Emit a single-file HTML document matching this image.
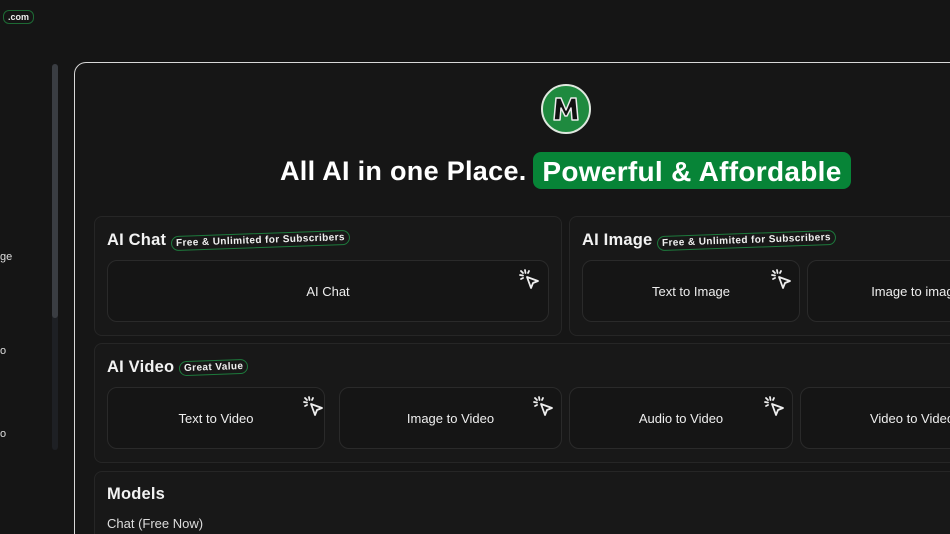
<!DOCTYPE html>
<html><head><meta charset="utf-8"><style>
*{margin:0;padding:0;box-sizing:border-box}
html,body{width:950px;height:534px;overflow:hidden}
body{background:#151515;font-family:"Liberation Sans","DejaVu Sans",sans-serif;color:#eee;position:relative}
.abs{position:absolute}
.panel{left:74px;top:62px;width:900px;height:490px;border:1px solid #d8d8d8;border-radius:12px;background:#161616}
.sec{border:1px solid #262626;border-radius:8px;background:#181818}
.card{border:1px solid #2a2a2a;border-radius:10px;background:#151515;display:flex;align-items:center;justify-content:center;font-size:13px;color:#eee}
.title{font-weight:bold;font-size:16.5px;color:#f2f2f2;letter-spacing:0.2px}
.badge{display:inline-block;border:1.5px solid #1d7a3c;border-radius:8px;font-size:10px;font-weight:bold;padding:1px 4px;transform:rotate(-2deg);color:#f0f0f0;white-space:nowrap;letter-spacing:0.4px;vertical-align:2px}
.ic{position:absolute;width:22px;height:22px}
</style></head><body>
<div class="abs" style="left:3px;top:10px;border:1.5px solid #1d6a34;border-radius:6px;font-size:9px;font-weight:bold;padding:1px 4px;color:#eee">.com</div>
<div class="abs" style="left:52px;top:64px;width:6px;height:386px;background:#1e2024;border-radius:3px"></div>
<div class="abs" style="left:52px;top:64px;width:6px;height:254px;background:#3a3d42;border-radius:3px"></div>
<div class="abs" style="left:0;top:251px;font-size:11px;color:#ddd">ge</div>
<div class="abs" style="left:0;top:345px;font-size:11px;color:#ddd">o</div>
<div class="abs" style="left:0;top:428px;font-size:11px;color:#ddd">o</div>

<div class="abs panel"></div>
<svg class="abs" style="left:540px;top:83px" width="52" height="52" viewBox="0 0 52 52"><circle cx="26" cy="26" r="24" fill="#1f8a3f" stroke="#dfe8df" stroke-width="2"/><path d="M14 37 L16 15 L21 15 L26 27 L31 15 L36 15 L38 37 L32 37 L31 25 L27 33 L25 33 L21 25 L20 37 Z" fill="#111" stroke="#eaeaea" stroke-width="1.5" stroke-linejoin="round"/></svg>
<div class="abs" style="left:280px;top:156px;font-size:27px;font-weight:bold;color:#fff;white-space:nowrap;letter-spacing:0.3px">All AI in one Place.</div>
<div class="abs" style="left:533px;top:152px;width:318px;height:37px;background:#078437;border-radius:8px;font-size:28px;font-weight:bold;color:#fff;text-align:center;line-height:39px;white-space:nowrap;letter-spacing:0.3px">Powerful &amp; Affordable</div>

<div class="abs sec" style="left:94px;top:216px;width:468px;height:120px"></div>
<div class="abs sec" style="left:569px;top:216px;width:400px;height:120px"></div>
<div class="abs sec" style="left:94px;top:343px;width:880px;height:120px"></div>
<div class="abs sec" style="left:94px;top:471px;width:880px;height:80px"></div>

<div class="abs title" style="left:107px;top:231px">AI Chat <span class="badge">Free &amp; Unlimited for Subscribers</span></div>
<div class="abs title" style="left:582px;top:231px">AI Image <span class="badge">Free &amp; Unlimited for Subscribers</span></div>
<div class="abs title" style="left:107px;top:358px">AI Video <span class="badge">Great Value</span></div>
<div class="abs title" style="left:107px;top:485px">Models</div>
<div class="abs" style="left:107px;top:516px;font-size:13px;color:#ddd">Chat (Free Now)</div>

<div class="abs card" style="left:107px;top:260px;width:442px;height:62px">AI Chat</div>
<div class="abs card" style="left:582px;top:260px;width:218px;height:62px">Text to Image</div>
<div class="abs card" style="left:807px;top:260px;width:218px;height:62px">Image to image</div>
<div class="abs card" style="left:107px;top:387px;width:218px;height:62px">Text to Video</div>
<div class="abs card" style="left:339px;top:387px;width:223px;height:62px">Image to Video</div>
<div class="abs card" style="left:569px;top:387px;width:224px;height:62px">Audio to Video</div>
<div class="abs card" style="left:800px;top:387px;width:224px;height:62px">Video to Video</div>

<svg width="0" height="0" style="position:absolute"><defs><g id="cl" fill="none" stroke="#eee" stroke-width="1.8" stroke-linecap="round" stroke-linejoin="round"><path d="M9 9 L20 13 L15 15 L13 20 Z"/><path d="M7 2 L7.5 5"/><path d="M2 7 L5 7.5"/><path d="M3 3 L5 5"/><path d="M11 3 L10 5"/><path d="M3 11 L5 10"/></g></defs></svg>
<svg class="ic" style="left:518px;top:268px" viewBox="0 0 22 22"><use href="#cl"/></svg>
<svg class="ic" style="left:770px;top:268px" viewBox="0 0 22 22"><use href="#cl"/></svg>
<svg class="ic" style="left:302px;top:395px" viewBox="0 0 22 22"><use href="#cl"/></svg>
<svg class="ic" style="left:532px;top:395px" viewBox="0 0 22 22"><use href="#cl"/></svg>
<svg class="ic" style="left:763px;top:395px" viewBox="0 0 22 22"><use href="#cl"/></svg>
</body></html>
